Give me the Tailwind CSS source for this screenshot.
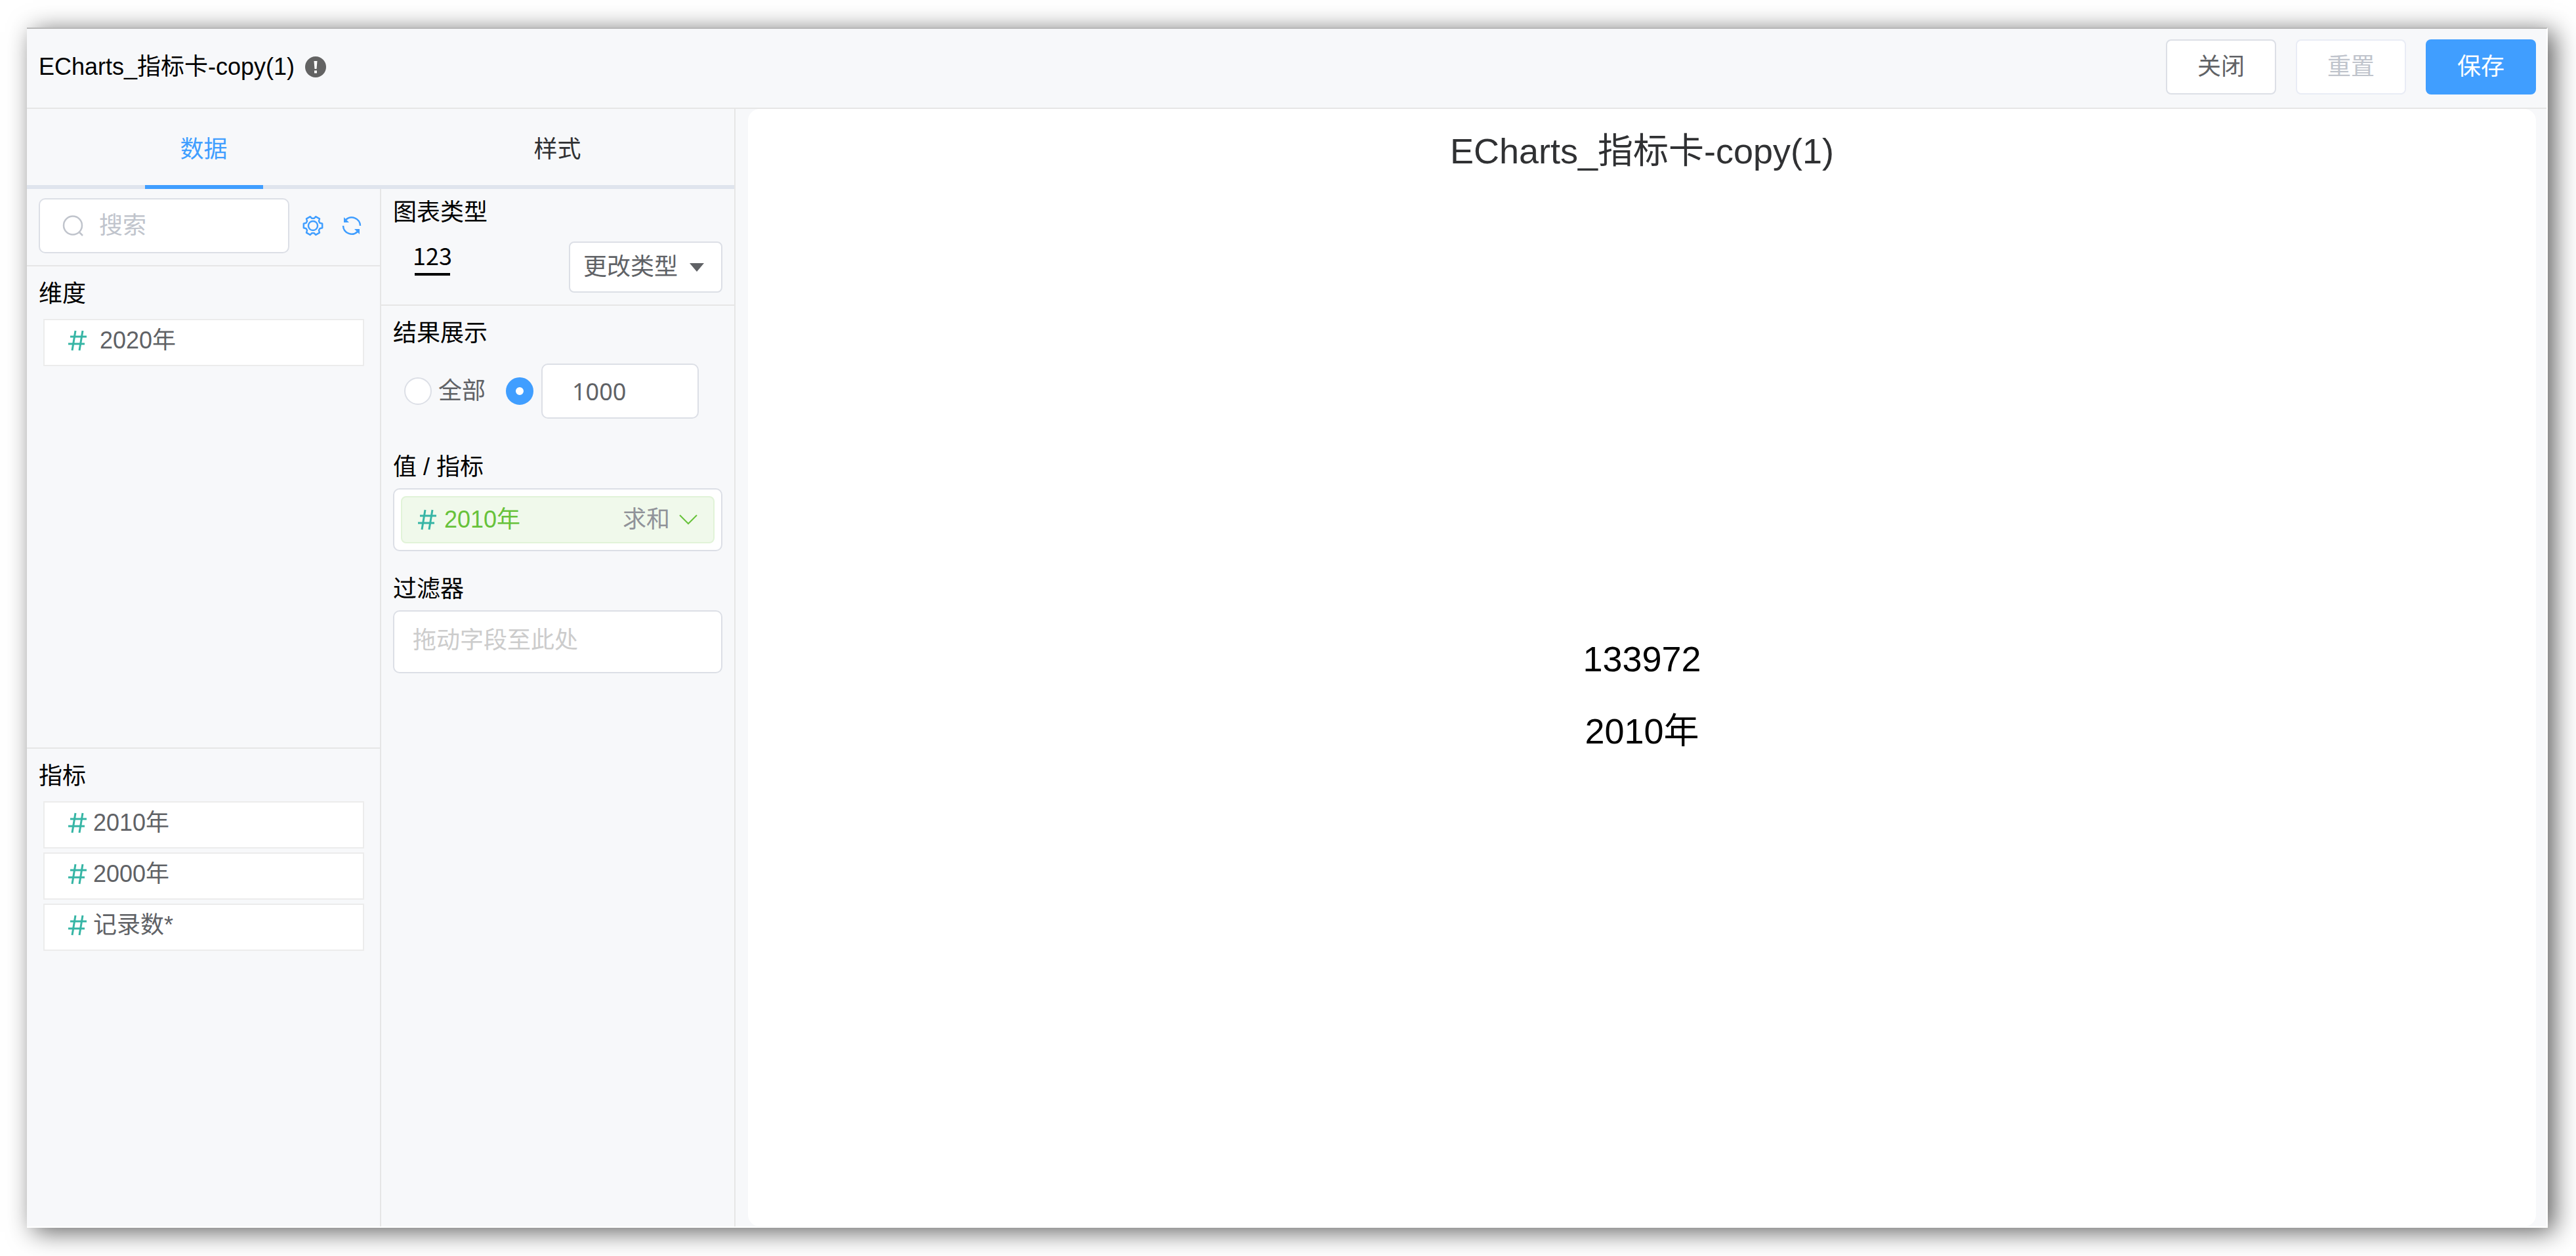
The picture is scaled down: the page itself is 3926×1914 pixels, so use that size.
<!DOCTYPE html>
<html lang="zh-CN">
<head>
<meta charset="utf-8">
<title>ECharts_指标卡-copy(1)</title>
<script src="https://cdn.jsdelivr.net/npm/@tailwindcss/browser@4"></script>
</head>
<body class="bg-white">
<svg class="hidden" aria-hidden="true">
  <symbol id="hash" viewBox="0 0 28 32"><path d="M11 1 6 31M22 1l-5 30M3 10h25M0 21h25" fill="none" stroke="#36b5a5" stroke-width="3"/></symbol>
</svg>
<div class="flex min-h-screen pt-[42px] pr-[43px] pb-[43px] pl-[41px] font-['Liberation_Sans','Noto_Sans_CJK_SC',sans-serif] text-[36px] leading-[48px] text-black">
  <div class="flex grow flex-col border-t-2 border-r-2 border-b-2 border-t-[#b8b8b8] border-r-white border-b-white bg-[#f7f8fa] shadow-[10px_6px_36px_rgba(0,0,0,0.63)]">
    <header class="flex h-[122px] items-center justify-between border-b-2 border-[#e6e6e6] pr-4 pb-1 pl-[18px]">
      <h1 class="flex items-center gap-4">
        <span>ECharts_指标卡-copy(1)</span>
        <svg class="size-8" viewBox="0 0 32 32"><circle cx="16" cy="16" r="16" fill="#636363"/><path d="M13.500 7h5l-1 12h-3z" fill="#fff"/><rect x="14" y="21.500" width="4" height="4" fill="#fff"/></svg>
      </h1>
      <div class="flex gap-[30px]">
        <button class="h-[84px] w-[168px] rounded-lg border-2 border-[#dcdfe6] bg-white text-[#606266]">关闭</button>
        <button disabled class="h-[84px] w-[168px] rounded-lg border-2 border-[#e9ecf5] bg-white text-[#c0c4cc]">重置</button>
        <button class="h-[84px] w-[168px] rounded-lg bg-[#409eff] text-white">保存</button>
      </div>
    </header>
    <div class="flex grow">
      <aside class="flex w-[1080px] shrink-0 flex-col border-r-2 border-[#e6e6e6]">
        <nav class="flex h-[122px] border-b-6 border-[#dfe4ed]">
          <a href="#data" class="-mb-[6px] flex flex-1 flex-col items-center pt-[38px] text-[#409eff]"><span>数据</span><span class="mt-auto h-[6px] w-[180px] bg-[#409eff]"></span></a>
          <a href="#style" class="flex flex-1 flex-col items-center pt-[38px] text-[#303133]">样式</a>
        </nav>
        <div class="flex grow">
          <section class="flex w-[540px] shrink-0 flex-col border-r-2 border-[#e6e6e6]">
            <div class="flex h-[118px] items-center border-b-2 border-[#e6e6e6] pb-1 pl-[18px]">
              <label class="flex h-[84px] w-[382px] items-center gap-6 rounded-[10px] border-2 border-[#dcdfe6] bg-white pl-[34px]">
                <svg class="size-8 shrink-0" viewBox="0 0 32 32" fill="none" stroke="#c0c4cc" stroke-width="2.500"><circle cx="16" cy="15.500" r="14"/><path d="m26 26 5 5"/></svg>
                <input type="text" aria-label="搜索" placeholder="搜索" class="w-60 bg-transparent outline-none placeholder:text-[#c0c4cc]">
              </label>
              <button aria-label="设置" class="ml-5"><svg class="size-8" viewBox="-1 -1 34 34" fill="none" stroke="#409eff" stroke-width="2.600" stroke-linejoin="round"><path d="M31.1 12.500V19.500L27.1 20.500 25.500 23.400 26.600 27.300 20.500 30.800 17.700 27.900H14.300L11.500 30.800 5.400 27.300 6.500 23.400 4.900 20.500.9 19.500V12.500L4.900 11.500 6.500 8.600 5.400 4.700 11.500 1.200 14.300 4.100H17.700L20.500 1.200 26.600 4.700 25.500 8.600 27.100 11.500z"/><circle cx="16" cy="16" r="7.500"/></svg></button>
              <button aria-label="刷新" class="ml-7"><svg class="size-[30px]" viewBox="0 0 30 30" fill="none" stroke="#409eff" stroke-width="2.500"><path d="M6 6a13 13 0 0 1 22 9M2 15a13 13 0 0 0 22 9"/><path d="M3 2v8h8zM27 28v-8h-8z" fill="#409eff" stroke="none"/></svg></button>
            </div>
            <div class="flex h-[735px] flex-col border-b-2 border-[#e6e6e6] pt-[18px]">
              <h2 class="pl-[18px]">维度</h2>
              <ul class="mt-[14px] flex flex-col gap-[6px] pr-6 pl-[25px]">
                <li class="flex h-[72px] items-center gap-5 border-2 border-[#ececec] bg-white pb-[6px] pl-9 text-[#606266]"><svg class="h-8 w-7"><use href="#hash"/></svg><span>2020年</span></li>
              </ul>
            </div>
            <div class="pt-[18px]">
              <h2 class="pl-[18px]">指标</h2>
              <ul class="mt-[14px] flex flex-col gap-[6px] pr-6 pl-[25px]">
                <li class="flex h-[72px] items-center gap-[10px] border-2 border-[#ececec] bg-white pb-[6px] pl-9 text-[#606266]"><svg class="h-8 w-7"><use href="#hash"/></svg><span>2010年</span></li>
                <li class="flex h-[72px] items-center gap-[10px] border-2 border-[#ececec] bg-white pb-[6px] pl-9 text-[#606266]"><svg class="h-8 w-7"><use href="#hash"/></svg><span>2000年</span></li>
                <li class="flex h-[72px] items-center gap-[10px] border-2 border-[#ececec] bg-white pb-[6px] pl-9 text-[#606266]"><svg class="h-8 w-7"><use href="#hash"/></svg><span>记录数*</span></li>
              </ul>
            </div>
          </section>
          <section class="flex grow flex-col">
            <div class="h-[178px] border-b-2 border-[#e6e6e6] pt-3 pr-[18px] pl-[18px]">
              <h2>图表类型</h2>
              <div class="mt-4 flex items-start justify-between">
                <span class="ml-[30px] flex w-[60px] flex-col items-center gap-1 text-[36px] leading-[48px] font-['Noto_Sans_CJK_SC',sans-serif]">123<span class="h-1 w-[54px] bg-black"></span></span>
                <button aria-haspopup="listbox" class="mt-1 flex h-[78px] w-[234px] items-center gap-[18px] rounded-lg border-2 border-[#dcdfe6] bg-white pl-5 text-[#606266]">更改类型<svg class="h-[13px] w-[22px] shrink-0" viewBox="0 0 22 13"><path d="M0 0h22L11 13z" fill="#606266"/></svg></button>
              </div>
            </div>
            <div class="flex flex-col px-[18px] pt-[18px]">
              <h2>结果展示</h2>
              <div class="mt-[22px] flex items-center pl-[17px] text-[#606266]">
                <label class="flex items-center gap-[10px]"><input type="radio" name="limit" class="size-[42px] appearance-none rounded-full border-2 border-[#dcdfe6] bg-white"><span>全部</span></label>
                <input type="radio" name="limit" checked aria-label="自定义条数" class="ml-[31px] size-[42px] appearance-none rounded-full border-[15px] border-[#409eff] bg-white">
                <input type="text" aria-label="条数" value="1000" class="ml-3 h-[84px] w-[240px] rounded-[10px] border-2 border-[#dcdfe6] bg-white pl-[45px] font-['Noto_Sans',sans-serif] outline-none">
              </div>
              <h2 class="mt-[50px]">值 / 指标</h2>
              <div class="mt-2 h-24 rounded-[10px] border-2 border-[#dcdfe6] bg-white p-[10px]">
                <div class="flex h-[72px] items-center rounded-lg border-2 border-[#e1f3d8] bg-[#f0f9eb] pr-6 pl-6 text-[#67c23a]">
                  <svg class="h-8 w-7"><use href="#hash"/></svg><span class="ml-3">2010年</span>
                  <span class="ml-auto text-[#909399]">求和</span>
                  <svg class="ml-[14px] h-4 w-7" viewBox="0 0 28 16" fill="none" stroke="#67c23a" stroke-width="2"><path d="m1 1 13 13L27 1"/></svg>
                </div>
              </div>
              <h2 class="mt-[34px]">过滤器</h2>
              <div class="mt-2 h-24 rounded-[10px] border-2 border-[#dcdfe6] bg-white pt-5 pl-7 text-[#cccccc]">拖动字段至此处</div>
            </div>
          </section>
        </div>
      </aside>
      <main class="flex grow pr-4 pl-[19px]">
        <div class="flex grow flex-col items-center rounded-[18px] bg-white pt-7 leading-[72px] text-[54px]">
          <h2 class="text-[#303133]">ECharts_指标卡-copy(1)</h2>
          <div class="flex grow flex-col items-center justify-center gap-[38px] pb-[18px]"><p>133972</p><p>2010年</p></div>
        </div>
      </main>
    </div>
  </div>
</div>
</body>
</html>
